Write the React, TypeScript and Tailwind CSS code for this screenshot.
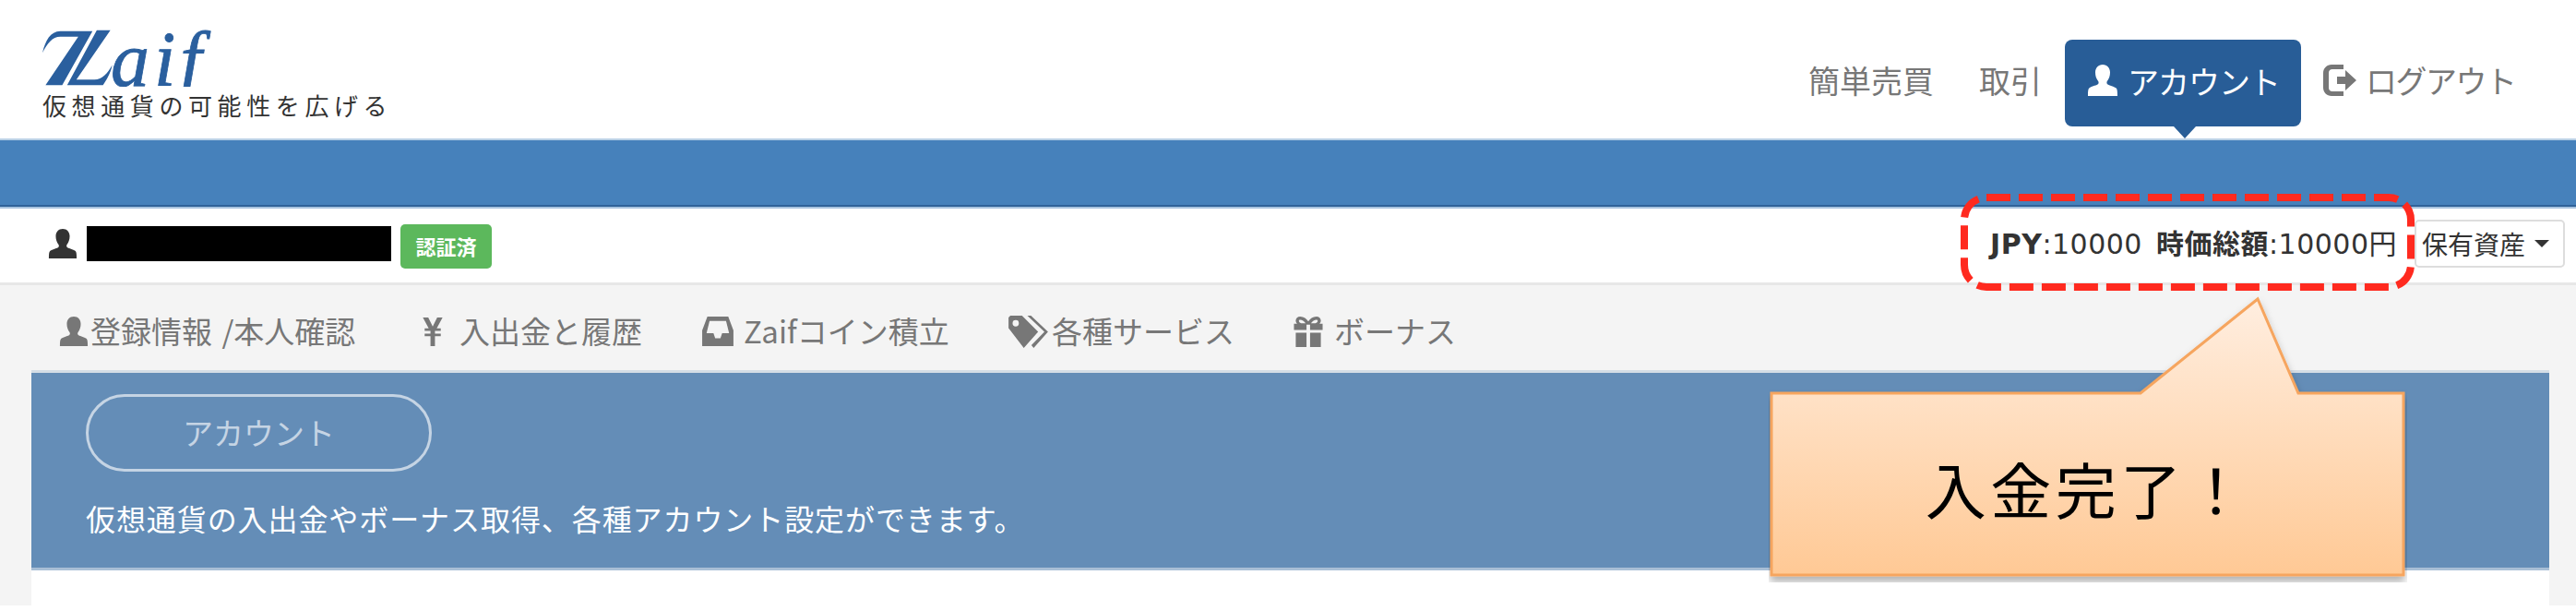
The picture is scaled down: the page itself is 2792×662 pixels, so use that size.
const JP = "font-['Noto_Sans_CJK_JP','Noto_Sans',sans-serif]";

const UserIcon = ({ className }: { className: string }) => (
  <svg viewBox="0 0 32 34" className={className} fill="currentColor">
    <path d="M16 0c-5 0-8 3.600-8 8.600 0 3.600 1.200 7 3 9.200 .9 1.200 .8 3-.5 3.800-2 1.200-7.500 2.400-9.200 4C.3 26.800 0 29 0 34h32c0-5-.3-7.200-1.300-8.400-1.700-1.600-7.200-2.800-9.200-4-1.300-.8-1.400-2.600-.5-3.800 1.800-2.200 3-5.600 3-9.200C24 3.600 21 0 16 0z" />
  </svg>
);

const LogoutIcon = ({ className }: { className: string }) => (
  <svg viewBox="0 0 36 34" className={className} fill="currentColor">
    <path d="M9 0h13v5H10C7.500 5 6 6.500 6 9v16c0 2.500 1.500 4 4 4h12v5H9c-5 0-9-4-9-9V9c0-5 4-9 9-9z" />
    <path d="M15 13h9V6l12 11-12 11v-7h-9z" />
  </svg>
);

const YenIcon = ({ className }: { className: string }) => (
  <svg viewBox="0 0 22 32" className={className} fill="currentColor">
    <path d="M0 0h6l5 10 5-10h6l-6.500 12H20v3h-6.500v3H20v3h-6.500v11h-5V21H2v-3h6.500v-3H2v-3h4.500z" />
  </svg>
);

const InboxIcon = ({ className }: { className: string }) => (
  <svg viewBox="0 0 36 34" className={className} fill="currentColor">
    <path fillRule="evenodd" d="M6 0h24l6 16v18H0V16zM8.500 5 5 19h8l2 6h6l2-6h8L27.500 5z" />
  </svg>
);

const TagsIcon = ({ className }: { className: string }) => (
  <svg viewBox="0 0 44 36" className={className} fill="currentColor">
    <path fillRule="evenodd" d="M2 0h13l18 18-16 18L0 14V2zM8 5a3.500 3.500 0 1 0 0 7 3.500 3.500 0 0 0 0-7z" />
    <path d="M21 0h4l19 18-16 18-2.500-3L40 18z" />
  </svg>
);

const GiftIcon = ({ className }: { className: string }) => (
  <svg viewBox="0 0 32 34" className={className} fill="currentColor">
    <path fillRule="evenodd" d="M7 0c4 0 7 2.500 9 5.500C18 2.500 21 0 25 0c3 0 5 2 5 4.500 0 1.500-.6 2.700-1.500 3.500H32v7H18V9h-4v6H0V8h3.500C2.600 7.200 2 6 2 4.500 2 2 4 0 7 0zm0 3.500C6 3.500 5.500 4 5.500 5S6.500 7 8 7.500h5C11.500 5 9 3.500 7 3.500zm18 0c-2 0-4.500 1.500-6 4h5c1.500-.5 2.500-1.500 2.500-2.500S26 3.500 25 3.500z" />
    <path d="M2 18h12v16H2zM18 18h12v16H18z" />
  </svg>
);

// the double-stroked Z of the logo
const LogoMark = () => (
  <svg viewBox="20 25 230 185" className="h-[62px] w-[77px] shrink-0" fill="#2a5f9e">
    <path d="M20 100C30 60 45 31 78 30L182 30L84 205L30 205L136 48L78 48C52 48 36 70 20 100Z" />
    <path d="M196 27L240 27L130 187L188 187C214 187 232 165 246 140C240 168 226 190 216 205L100 205Z" />
  </svg>
);

const tabs = [
  { label: "登録情報 /本人確認", icon: <UserIcon className="w-[32px] h-[32px]" />, gap: "gap-[2px]", width: "w-[394px]" },
  { label: "入出金と履歴", icon: <YenIcon className="w-[22px] h-[31px]" />, gap: "gap-[18px]", width: "w-[302px]" },
  { label: "Zaifコイン積立", icon: <InboxIcon className="w-[36px] h-[32px]" />, gap: "gap-[10px]", width: "w-[333px]" },
  { label: "各種サービス", icon: <TagsIcon className="w-[43px] h-[35px]" />, gap: "gap-[4px]", width: "w-[309px]" },
  { label: "ボーナス", icon: <GiftIcon className="w-[32px] h-[33px]" />, gap: "gap-[12px]", width: "" },
];

const App = () => {
  return (
    <div className={`relative h-[662px] w-[2792px] overflow-hidden bg-white ${JP}`}>
      {/* Header */}
      <div className="flex h-[150px] items-start justify-between">
        <div className="pl-[46px] pt-[32px]">
          <div className="flex h-[61px] items-start">
            <LogoMark />
            {/* clipped so the italic f stops on the baseline, as in the logo */}
            <span className="ml-[-3px] h-[62px] overflow-hidden pr-[12px] font-['Liberation_Serif',serif] text-[84px] italic leading-[65px] tracking-[5px] text-[#2a5f9e] [-webkit-text-stroke:0.8px_#2a5f9e]">aif</span>
          </div>
          <div className="mt-[8px] whitespace-nowrap text-[26px] leading-[26px] tracking-[5.600px] text-[#333]">仮想通貨の可能性を広げる</div>
        </div>

        <nav className="flex items-start pt-[43px] pr-[66px] text-[34px] text-[#777]">
          <span className="mt-[19px] leading-[50px]">簡単売買</span>
          <span className="ml-[49px] mt-[19px] leading-[50px]">取引</span>
          <div className="relative ml-[25px] flex h-[94px] w-[256px] items-center gap-[10px] rounded-[8px] bg-[#285d97] pl-[24px] pb-[6px] text-white">
            <UserIcon className="h-[34px] w-[34px]" />
            <span className="tracking-[-1px]">アカウント</span>
            <span className="absolute left-[118px] top-[94px] h-0 w-0 border-x-[12px] border-t-[13px] border-x-transparent border-t-[#285d97]" />
          </div>
          <div className="ml-[24px] mt-[19px] flex items-center gap-[10px] leading-[50px]">
            <LogoutIcon className="h-[34px] w-[36px]" />
            <span className="w-[162px] whitespace-nowrap tracking-[-1.500px]">ログアウト</span>
          </div>
        </nav>
      </div>

      {/* Blue bar */}
      <div className="h-[76px] border-y-2 border-t-[#b9d0e6] border-b-[#a9c4df]">
        <div className="h-full border-b-2 border-[#2f6299] bg-[#4681bb]" />
      </div>

      {/* User row */}
      <div className="flex h-[83px] items-center justify-between border-b-[3px] border-[#e7e7e7] pb-[4px] pl-[52px] pr-[12px]">
        <div className="flex items-center">
          <UserIcon className="h-[32px] w-[32px] text-[#333]" />
          <div className="ml-[10px] h-[38px] w-[330px] bg-black" />
          <span className="ml-[10px] mt-[5px] flex h-[48px] w-[99px] items-center justify-center rounded-[5px] bg-[#5cb85c] text-[22px] font-bold text-white">認証済</span>
        </div>
        <div className="flex items-center text-[#333]">
          <span className="mr-[19px] whitespace-nowrap font-['DejaVu_Sans','Noto_Sans_CJK_JP',sans-serif] text-[30px] tracking-[0.5px]">
            <b>JPY</b>:10000 <b className="ml-[5px]">時価総額</b>:10000円
          </span>
          <button className="flex h-[52px] w-[163px] items-center gap-[10px] rounded-[5px] border-2 border-[#ddd] bg-white pl-[6px] text-[28px]">
            保有資産
            <span className="h-0 w-0 border-x-[8px] border-t-[8px] border-x-transparent border-t-[#333]" />
          </button>
        </div>
      </div>

      {/* Page body */}
      <div className="flex h-[347px] flex-col bg-[#f4f4f4] px-[29px]">
        <div className="flex h-[92px] items-center pl-[35px] pt-[8px] text-[33px] text-[#777]">
          {tabs.map((tab) => (
            <div key={tab.label} className={`flex items-center whitespace-nowrap ${tab.gap} ${tab.width}`}>
              {tab.icon}
              <span className="[word-spacing:3px]">{tab.label}</span>
            </div>
          ))}
        </div>
        <div className="ml-[5px] flex-1 bg-white">
          <div className="h-[217px] border-t-[3px] border-t-[#d4dde6] border-b-[3px] border-b-[#a9bfd6] bg-[#648db7] pl-[59px] pt-[23px]">
            <div className="flex h-[84px] w-[375px] items-center justify-center rounded-full border-[3px] border-[#c5d4e4] text-[33px] text-[#c5d4e4]">アカウント</div>
            <p className="mt-[30px] whitespace-nowrap text-[32px] leading-[40px] tracking-[0.92px] text-white">仮想通貨の入出金やボーナス取得、各種アカウント設定ができます。</p>
          </div>
        </div>
      </div>

      {/* Red dashed annotation */}
      <svg className="absolute left-[2121px] top-[206px] h-[113px] w-[500px]" viewBox="0 0 500 113" fill="none">
        <rect x="8" y="8" width="484" height="97" rx="24" stroke="#ff2a1f" strokeWidth="8" strokeDasharray="26 9" />
      </svg>

      {/* Callout */}
      <div className="absolute left-[1917px] top-[321px] h-[310px] w-[692px]">
        <svg className="absolute inset-0 h-full w-full" viewBox="0 0 692 310" fill="none">
          <defs>
            <linearGradient id="callout" x1="0" y1="0" x2="0" y2="1">
              <stop offset="0" stopColor="#ffeee0" />
              <stop offset="1" stopColor="#ffc995" />
            </linearGradient>
            <filter id="drop" x="-5%" y="-5%" width="110%" height="115%">
              <feDropShadow dx="0" dy="6" stdDeviation="4" floodColor="#000" floodOpacity="0.3" />
            </filter>
          </defs>
          <path d="M3 105H403L530 3L574 105H688V302H3Z" fill="url(#callout)" stroke="#f6a55e" strokeWidth="3" filter="url(#drop)" />
        </svg>
        <div className="absolute left-0 right-0 top-[109px] flex h-[197px] items-center justify-center text-[66px] tracking-[4.500px] text-black">入金完了！</div>
      </div>
    </div>
  );
};

export default App;
